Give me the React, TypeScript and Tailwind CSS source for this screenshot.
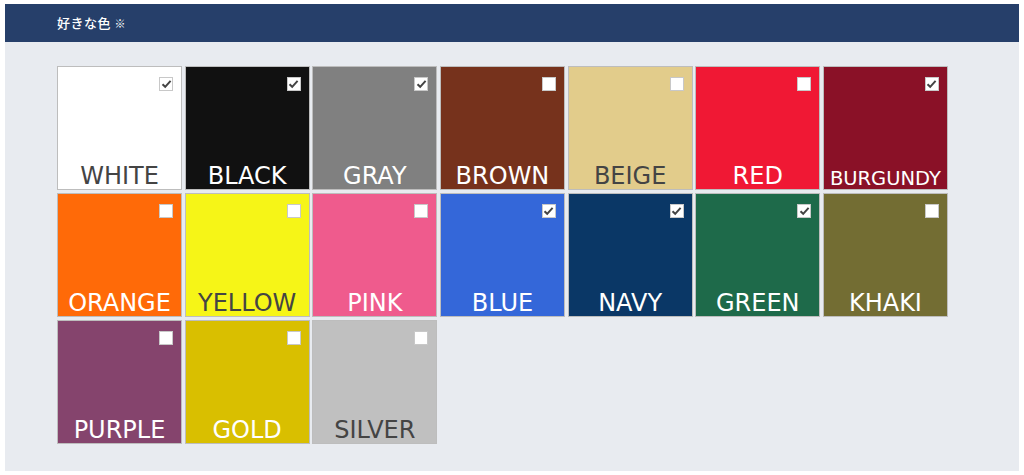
import React from "react";

type C = { name: string; bg: string; dark?: boolean; checked?: boolean; small?: boolean };

const colors: C[] = [
  { name: "WHITE", bg: "bg-[#ffffff]", dark: true, checked: true },
  { name: "BLACK", bg: "bg-[#111111]", checked: true },
  { name: "GRAY", bg: "bg-[#808080]", checked: true },
  { name: "BROWN", bg: "bg-[#76321c]" },
  { name: "BEIGE", bg: "bg-[#e2cc8b]", dark: true },
  { name: "RED", bg: "bg-[#f01834]" },
  { name: "BURGUNDY", bg: "bg-[#8a1127]", checked: true, small: true },
  { name: "ORANGE", bg: "bg-[#ff6a08]" },
  { name: "YELLOW", bg: "bg-[#f6f517]", dark: true },
  { name: "PINK", bg: "bg-[#ef5b8d]" },
  { name: "BLUE", bg: "bg-[#3467d9]", checked: true },
  { name: "NAVY", bg: "bg-[#0a3766]", checked: true },
  { name: "GREEN", bg: "bg-[#1e6a4a]", checked: true },
  { name: "KHAKI", bg: "bg-[#736d33]" },
  { name: "PURPLE", bg: "bg-[#85446d]" },
  { name: "GOLD", bg: "bg-[#d9bf00]" },
  { name: "SILVER", bg: "bg-[#c0c0c0]", dark: true },
];

function Box({ checked }: { checked?: boolean }) {
  return (
    <div className="w-[14px] h-[14px] bg-white border border-[#c8c8c8] flex items-center justify-center">
      {checked && (
        <svg width="11" height="10" viewBox="0 0 11 10">
          <path d="M1.5 5.2 L4.2 7.8 L9.6 1.8" fill="none" stroke="#444" strokeWidth="2" />
        </svg>
      )}
    </div>
  );
}

export default function App() {
  return (
    <div className="w-[1024px] h-[475px] bg-white pt-[4px] px-[5px]" style={{ fontFamily: '"DejaVu Sans", "Noto Sans CJK JP", sans-serif' }}>
      <div className="h-[38px] bg-[#263f6a] flex items-center pl-[52px]">
        <span className="text-white text-[13px] font-medium tracking-[0.5px]" style={{ fontFamily: '"Noto Sans CJK JP", sans-serif' }}>
          好きな色 <span className="text-[11px]">※</span>
        </span>
      </div>
      <div className="h-[429px] bg-[#e8ebf0] pl-[52px] pt-[24px]">
        <div className="grid grid-cols-[repeat(7,125px)] auto-rows-[124px] gap-x-[2.67px] gap-y-[3px]">
          {colors.map((c) => (
            <div key={c.name} className={`${c.bg} border border-[#bdbdbd] flex flex-col relative`}>
              <div className="flex justify-end pt-[10px] pr-[8px]">
                <Box checked={c.checked} />
              </div>
              <div className="flex-1" />
              <div
                className={`text-center leading-none pb-[1px] ${c.small ? "text-[19.5px]" : "text-[24px]"} ${c.dark ? "text-[#444444]" : "text-white"}`}
              >
                {c.name}
              </div>
            </div>
          ))}
        </div>
      </div>
    </div>
  );
}
